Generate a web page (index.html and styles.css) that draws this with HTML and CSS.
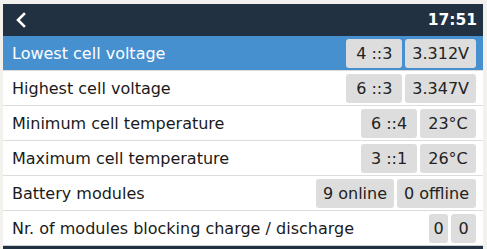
FILE: index.html
```html
<!DOCTYPE html>
<html lang="en">
<head>
  <meta charset="UTF-8" />
  <title>Battery details</title>
  <link rel="stylesheet" href="styles.css">
</head>
<body>
  <div class="screen">
    <div class="topbar">
      <svg class="back" width="12" height="16" viewBox="0 0 12 16">
        <path d="M9 2 L3 8 L9 14" fill="none" stroke="#fff" stroke-width="2.6" stroke-linecap="square"/>
      </svg>
      <span class="clock">17:51</span>
    </div>

    <div class="list">
      <div class="row selected">
        <span class="label">Lowest cell voltage</span>
        <div class="values"><span class="pill">4 ::3</span><span class="pill">3.312V</span></div>
      </div>
      <div class="row">
        <span class="label">Highest cell voltage</span>
        <div class="values"><span class="pill">6 ::3</span><span class="pill">3.347V</span></div>
      </div>
      <div class="row">
        <span class="label">Minimum cell temperature</span>
        <div class="values"><span class="pill">6 ::4</span><span class="pill">23°C</span></div>
      </div>
      <div class="row">
        <span class="label">Maximum cell temperature</span>
        <div class="values"><span class="pill">3 ::1</span><span class="pill">26°C</span></div>
      </div>
      <div class="row">
        <span class="label">Battery modules</span>
        <div class="values"><span class="pill">9 online</span><span class="pill">0 offline</span></div>
      </div>
      <div class="row">
        <span class="label">Nr. of modules blocking charge / discharge</span>
        <div class="values"><span class="pill tiny">0</span><span class="pill small">0</span></div>
      </div>
    </div>

    <div class="bottombar"></div>
  </div>
</body>
</html>
```

FILE: styles.css
```css
body {
  margin: 0;
  background: #f2f1ee;
  font-family: 'DejaVu Sans', sans-serif;
}
.screen {
  margin: 4px 4px 0 3px;
  background: #ffffff;
}
.topbar {
  height: 32px;
  background: #223142;
  display: flex;
  align-items: center;
  justify-content: space-between;
  padding: 0 6px 0 12px;
}
.back {
  display: block;
}
.clock {
  color: #ffffff;
  font-weight: bold;
  font-size: 15.5px;
}
.row {
  height: 34px;
  border-bottom: 1px solid #dcdcdc;
  display: flex;
  align-items: center;
  justify-content: space-between;
  padding: 0 7px 0 9px;
  font-size: 16px;
  color: #1a1a1a;
}
.row:last-child {
  border-bottom-color: #d0d0d0;
}
.row.selected {
  background: #4790d0;
  color: #ffffff;
}
.values {
  display: flex;
  gap: 3px;
}
.pill {
  box-sizing: border-box;
  min-width: 56px;
  text-align: center;
  background: #dddddd;
  color: #222222;
  border-radius: 3px;
  height: 29px;
  line-height: 29px;
  padding: 0 7px;
}
.pill.tiny {
  min-width: 19px;
  padding: 0 4px;
}
.pill.small {
  min-width: 25px;
  padding: 0 7px;
}
.bottombar {
  height: 5px;
  background: #223142;
}
```
